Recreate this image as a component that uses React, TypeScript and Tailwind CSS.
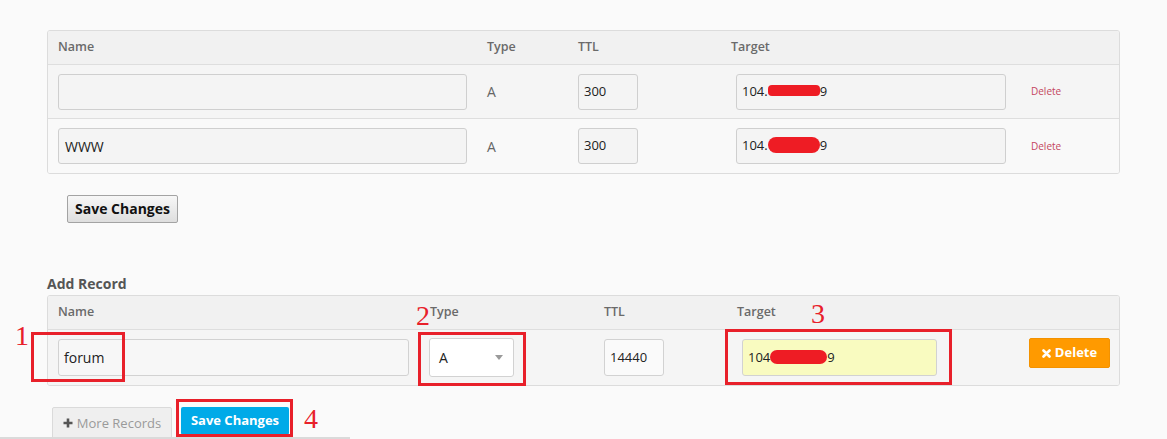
import React from "react";

const Blob = ({ w, h = 13, round = "rounded-[6px]" }: { w: number; h?: number; round?: string }) => (
  <span
    className={`inline-block bg-[#ee1c24] align-middle ${round}`}
    style={{ width: w, height: h, marginTop: -2 }}
  />
);

const Red = ({ cls }: { cls: string }) => (
  <div className={`absolute border-[3px] border-[#e8202a] ${cls}`} />
);

const Num = ({ n, cls }: { n: string; cls: string }) => (
  <div
    className={`absolute text-[28px] leading-[28px] text-[#e8202a] ${cls}`}
    style={{ fontFamily: '"Liberation Serif", "Times New Roman", serif' }}
  >
    {n}
  </div>
);

export default function App() {
  return (
    <div
      className="relative w-full h-[439px] overflow-hidden bg-[#fafafa] text-[#333]"
      style={{ fontFamily: '"Open Sans", "Liberation Sans", sans-serif' }}
    >
      <div className="ml-[47px] pt-[30px] w-[1073px]">
        {/* Top table */}
        <div className="border border-[#dcdcdc] rounded-[3px] overflow-hidden">
          <div className="flex items-center h-[34px] pl-[10px] bg-[#f1f1f1] border-b border-[#dedede] text-[12.5px] font-semibold text-[#6a6a6a]">
            <div className="w-[429px]">Name</div>
            <div className="w-[91px]">Type</div>
            <div className="w-[153px]">TTL</div>
            <div className="w-[300px]">Target</div>
            <div className="flex-1" />
          </div>
          {[
            { name: "", bg: "bg-[#f5f5f5]", border: true, blob: "rounded-[4px]" },
            { name: "WWW", bg: "bg-[#f9f9f9]", border: false, blob: "rounded-[8px]" },
          ].map((r, i) => (
            <div
              key={i}
              className={`flex items-center h-[54px] pl-[10px] ${r.bg} ${r.border ? "border-b border-[#dedede]" : ""}`}
            >
              <div className="w-[429px]">
                <div className="w-[409px] h-[36px] border border-[#cfcfcf] rounded-[3px] bg-[#f4f4f4] px-[6px] flex items-center text-[14px] text-[#222]">
                  {r.name}
                </div>
              </div>
              <div className="w-[91px] text-[14px] text-[#666]">A</div>
              <div className="w-[153px]">
                <div className="w-[60px] h-[36px] border border-[#cfcfcf] rounded-[3px] bg-[#f4f4f4] px-[5px] flex items-center text-[13px] text-[#222]">
                  300
                </div>
              </div>
              <div className="w-[300px]">
                <div className="ml-[5px] w-[270px] h-[36px] border border-[#cfcfcf] rounded-[3px] bg-[#f4f4f4] px-[5px] flex items-center text-[13px] text-[#222]">
                  104.
                  <Blob w={52} h={i === 0 ? 11 : 16} round={r.blob} />9
                </div>
              </div>
              <div className="flex-1 text-[10px] text-[#c4465e]">Delete</div>
            </div>
          ))}
        </div>

        {/* Save Changes (top) */}
        <button className="mt-[21px] ml-[20px] w-[111px] h-[28px] border border-[#a3a3a3] rounded-[2px] bg-gradient-to-b from-[#f7f7f7] to-[#dedede] text-[14px] font-bold text-[#111] leading-none">
          Save Changes
        </button>

        <div className="mt-[53px] mb-[3px] text-[14px] leading-[16px] font-bold text-[#555]">Add Record</div>

        {/* Add record table */}
        <div className="border border-[#dcdcdc] rounded-[3px] overflow-hidden">
          <div className="flex items-center h-[34px] pl-[10px] bg-[#f1f1f1] border-b border-[#dedede] text-[12.5px] font-semibold text-[#6a6a6a]">
            <div className="w-[372px]">Name</div>
            <div className="w-[174px]">Type</div>
            <div className="w-[133px]">TTL</div>
            <div className="w-[292px]">Target</div>
            <div className="flex-1" />
          </div>
          <div className="flex items-center h-[55px] pl-[10px] bg-[#f5f5f5]">
            <div className="w-[372px]">
              <div className="w-[351px] h-[37px] border border-[#d2d2d2] rounded-[3px] bg-[#f7f7f7] px-[5px] flex items-center text-[14px] text-[#222]">
                forum
              </div>
            </div>
            <div className="w-[174px]">
              <div className="-ml-[1px] w-[85px] h-[39px] border border-[#d2d2d2] rounded-[3px] bg-white pl-[9px] pr-[10px] flex items-center justify-between text-[14px] text-[#222]">
                <span>A</span>
                <svg width="8" height="5" viewBox="0 0 8 5">
                  <path d="M0 0 L8 0 L4 5 Z" fill="#9a9a9a" />
                </svg>
              </div>
            </div>
            <div className="w-[133px]">
              <div className="w-[60px] h-[37px] border border-[#d2d2d2] rounded-[3px] bg-[#fafafa] px-[5px] flex items-center text-[13px] text-[#222]">
                14440
              </div>
            </div>
            <div className="w-[292px]">
              <div className="ml-[5px] w-[195px] h-[37px] border border-[#d2d2d2] rounded-[3px] bg-[#f9fbc0] px-[5px] flex items-center text-[13px] text-[#222]">
                104
                <Blob w={57} h={14} round="rounded-[7px]" />9
              </div>
            </div>
            <div className="flex-1 mb-[9px]">
              <button className="w-[81px] h-[30px] rounded-[2px] bg-[#ff9a00] border border-[#f39200] text-white text-[13px] font-bold flex items-center justify-center gap-[4px]">
                <svg width="9" height="9" viewBox="0 0 9 9">
                  <path d="M1.5 1.5 L7.5 7.5 M7.5 1.5 L1.5 7.5" stroke="#fff" strokeWidth="2.6" strokeLinecap="round" />
                </svg>
                Delete
              </button>
            </div>
          </div>
        </div>

        <div className="mt-[21px] flex items-start">
          <button className="ml-[5px] w-[120px] h-[34px] border border-[#dadada] rounded-[2px] bg-[#efefef] text-[13px] text-[#9a9a9a] flex items-start pt-[6px] justify-center gap-[4px]">
            <svg width="10" height="10" viewBox="0 0 10 10" className="mt-[4px]">
              <path d="M5 0.5 V9.5 M0.5 5 H9.5" stroke="#555" strokeWidth="2.6" />
            </svg>
            More Records
          </button>
          <button className="ml-[9px] w-[108px] h-[28px] rounded-[2px] bg-[#00aae8] text-white text-[13px] font-bold">
            Save Changes
          </button>
        </div>
      </div>

      {/* Annotations */}
      <Red cls="left-[31px] top-[332px] w-[94px] h-[50px]" />
      <Red cls="left-[418px] top-[332px] w-[108px] h-[54px]" />
      <Red cls="left-[725px] top-[329px] w-[227px] h-[56px]" />
      <Red cls="left-[176px] top-[399px] w-[117px] h-[38px]" />
      <Num n="1" cls="left-[15px] top-[322px]" />
      <Num n="2" cls="left-[416px] top-[302px]" />
      <Num n="3" cls="left-[811px] top-[300px]" />
      <Num n="4" cls="left-[304px] top-[405px]" />

      <div className="absolute left-0 bottom-0 w-[350px] h-[2px] bg-[#dadada]" />
    </div>
  );
}
